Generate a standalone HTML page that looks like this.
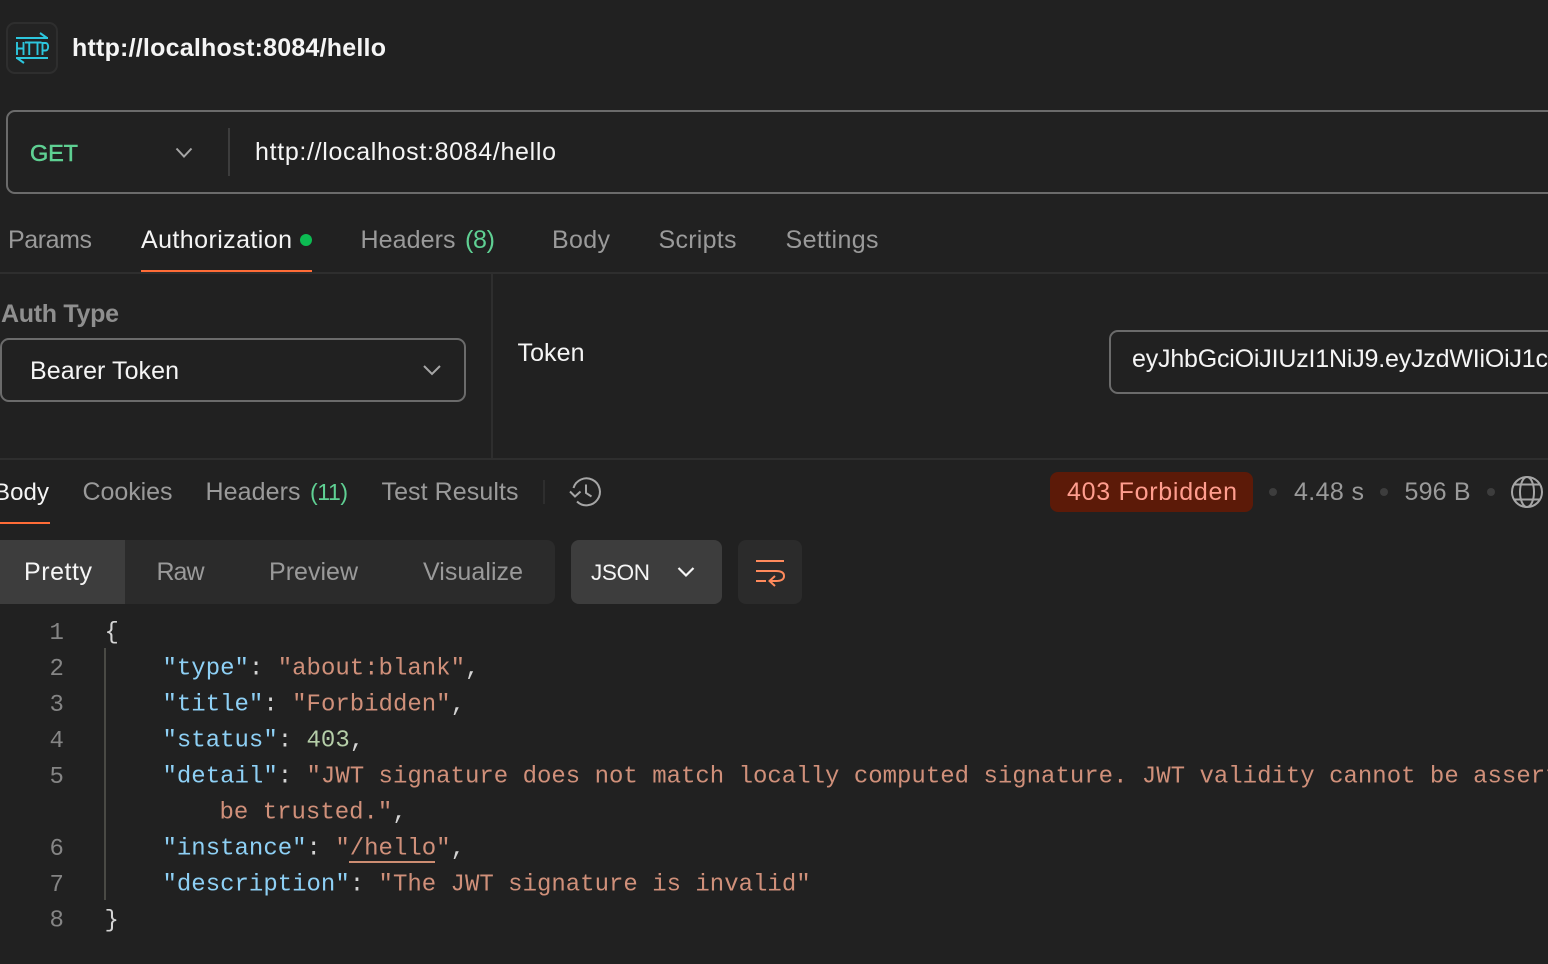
<!DOCTYPE html>
<html><head><meta charset="utf-8">
<style>
html,body{margin:0;padding:0;background:#212121;width:1548px;height:964px;overflow:hidden}
svg{display:block}
text{font-family:"Liberation Sans",sans-serif;font-size:25px;white-space:pre}
text.m{font-family:"Liberation Mono",monospace;font-size:24px}
.g{fill:#9a9a9a}.w{fill:#f5f5f5}
.k{fill:#8ed0f5}.s{fill:#d0907a}.n{fill:#b5cea8}.p{fill:#d4d4d4}.l{fill:#858585}
</style></head><body>
<svg width="1548" height="964" viewBox="0 0 1548 964" xmlns="http://www.w3.org/2000/svg" fill="none">
<rect width="1548" height="964" fill="#212121"/>

<!-- header -->
<rect x="7" y="23" width="50" height="50" rx="8" fill="#232323" stroke="#2e2e2e" stroke-width="2"/>
<g stroke="#2dc6dd" stroke-width="2">
<path d="M16 38H48M40 33l7 5"/>
<path d="M16 58H48M24 63l-7-5"/>
<path d="M17 55V42M23.500 55V42M17 48.500H23.500M25 42.500H33.500M29.250 42.500V55M33.500 42.500H41.500M37.500 42.500V55M42.500 55V43H45.500C49 43 49 50.500 45.500 50.500H42.500" stroke-width="1.900"/>
</g>
<text x="72" y="56" textLength="314" font-weight="700" class="w">http://localhost:8084/hello</text>

<!-- URL bar -->
<rect x="7" y="111" width="1600" height="82" rx="8" stroke="#6b6b6b" stroke-width="2"/>
<text x="30" y="161" textLength="48" style="font-size:23.500px;fill:#5fd093;stroke:#5fd093;stroke-width:.5px">GET</text>
<path d="M176.500 148.500l7.500 8 7.500-8" stroke="#a6a6a6" stroke-width="2"/>
<rect x="228" y="128" width="2" height="48" fill="#3d3d3d"/>
<text x="255" y="160" textLength="301" class="w">http://localhost:8084/hello</text>

<!-- request tabs -->
<text x="8" y="248" textLength="84" class="g">Params</text>
<text x="141" y="248" textLength="151" class="w">Authorization</text>
<circle cx="306" cy="240" r="6" fill="#0cbb52"/>
<text x="360.500" y="248" textLength="95" class="g">Headers</text>
<text x="465" y="248" textLength="30" style="fill:#5fd093">(8)</text>
<text x="552" y="248" textLength="58" class="g">Body</text>
<text x="658.500" y="248" textLength="78" class="g">Scripts</text>
<text x="785.500" y="248" textLength="93" class="g">Settings</text>
<rect y="272" width="1548" height="2" fill="#2e2e2e"/>
<rect x="141" y="270" width="171" height="2" fill="#ff6c37"/>

<!-- auth -->
<text x="1" y="322" textLength="118" font-weight="700" style="fill:#8f8f8f">Auth Type</text>
<rect x="1" y="339" width="464" height="62" rx="8" stroke="#6b6b6b" stroke-width="2"/>
<text x="30" y="379" textLength="149" class="w">Bearer Token</text>
<path d="M424 366l8 8 8-8" stroke="#a6a6a6" stroke-width="2"/>
<rect x="491" y="274" width="2" height="184" fill="#2e2e2e"/>
<text x="517.500" y="361" textLength="67" class="w">Token</text>
<rect x="1110" y="331" width="500" height="62" rx="8" stroke="#6b6b6b" stroke-width="2"/>
<text x="1132" y="367" textLength="416" class="w">eyJhbGciOiJIUzI1NiJ9.eyJzdWIiOiJ1c</text>
<rect y="458" width="1548" height="2" fill="#2e2e2e"/>

<!-- response tabs -->
<text x="-6" y="500" textLength="55" class="w" style="font-size:24px">Body</text>
<rect x="0" y="522" width="50" height="2" fill="#ff6c37"/>
<text x="82.500" y="500" textLength="90" class="g">Cookies</text>
<text x="205.500" y="500" textLength="95" class="g">Headers</text>
<text x="310" y="500" textLength="38" style="fill:#5fd093;font-size:23px">(11)</text>
<text x="381.500" y="500" textLength="137" class="g">Test Results</text>
<rect x="543" y="480" width="2" height="24" fill="#2e2e2e"/>
<g stroke="#a6a6a6" stroke-width="2">
<path d="M573.500 488A13.500 13.500 0 1 1 577 501.500"/>
<path d="M570 491.500l5 5 5.500-5"/>
<path d="M586 484.500v8.500l5.500 3.500"/>
</g>

<!-- status -->
<rect x="1050" y="472" width="203" height="40" rx="8" fill="#5c1a08"/>
<text x="1067" y="500" textLength="170" style="fill:#ff9d8e">403 Forbidden</text>
<circle cx="1273" cy="492" r="4" fill="#3d3d3d"/>
<text x="1294" y="500" textLength="70" class="g">4.48 s</text>
<circle cx="1384" cy="492" r="4" fill="#3d3d3d"/>
<text x="1404.500" y="500" textLength="66" class="g">596 B</text>
<circle cx="1491" cy="492" r="4" fill="#3d3d3d"/>
<g stroke="#a6a6a6" stroke-width="2">
<circle cx="1527" cy="492" r="15"/>
<ellipse cx="1527" cy="492" rx="7" ry="15"/>
<path d="M1514 484.500H1540M1514 499.500H1540"/>
</g>

<!-- view bar -->
<rect x="-10" y="540" width="565" height="64" rx="8" fill="#2b2b2b"/>
<path d="M0 540H125V604H0Z" fill="#3d3d3d"/>
<text x="24" y="580" textLength="68" class="w">Pretty</text>
<text x="156.500" y="580" textLength="48" class="g">Raw</text>
<text x="269" y="580" textLength="89" class="g">Preview</text>
<text x="423" y="580" textLength="100" class="g">Visualize</text>
<rect x="571" y="540" width="151" height="64" rx="8" fill="#3d3d3d"/>
<text x="591" y="580" textLength="59" class="w" style="font-size:22.500px">JSON</text>
<path d="M678.500 568l7.500 7.500 7.500-7.500" stroke="#f5f5f5" stroke-width="2.200"/>
<rect x="738" y="540" width="64" height="64" rx="8" fill="#2b2b2b"/>
<g stroke="#ff8a5c" stroke-width="2">
<path d="M756 561H784M756 571H776Q784 571 784 576T776 581H771"/>
<path d="M756 581H766M775 576l-5.500 5 5.500 5"/>
</g>

<!-- code -->
<rect x="104" y="648" width="2" height="252" fill="#4a4a45"/>
<text class="m l" x="49.500" y="639">1</text>
<text class="m l" x="49.500" y="675">2</text>
<text class="m l" x="49.500" y="711">3</text>
<text class="m l" x="49.500" y="747">4</text>
<text class="m l" x="49.500" y="783">5</text>
<text class="m l" x="49.500" y="855">6</text>
<text class="m l" x="49.500" y="891">7</text>
<text class="m l" x="49.500" y="926.500">8</text>
<text class="m p" x="104.500" y="638.500">{</text>
<text class="m" x="162.500" y="674.500"><tspan class="k">"type"</tspan><tspan class="p">: </tspan><tspan class="s">"about:blank"</tspan><tspan class="p">,</tspan></text>
<text class="m" x="162.500" y="710.500"><tspan class="k">"title"</tspan><tspan class="p">: </tspan><tspan class="s">"Forbidden"</tspan><tspan class="p">,</tspan></text>
<text class="m" x="162.500" y="746.500"><tspan class="k">"status"</tspan><tspan class="p">: </tspan><tspan class="n">403</tspan><tspan class="p">,</tspan></text>
<text class="m" x="162.500" y="782.500"><tspan class="k">"detail"</tspan><tspan class="p">: </tspan><tspan class="s">"JWT signature does not match locally computed signature. JWT validity cannot be asserted and should not</tspan></text>
<text class="m" x="219.500" y="818.500"><tspan class="s">be trusted."</tspan><tspan class="p">,</tspan></text>
<text class="m" x="162.500" y="854.500"><tspan class="k">"instance"</tspan><tspan class="p">: </tspan><tspan class="s">"/hello"</tspan><tspan class="p">,</tspan></text>
<text class="m" x="162.500" y="890.500"><tspan class="k">"description"</tspan><tspan class="p">: </tspan><tspan class="s">"The JWT signature is invalid"</tspan></text>
<text class="m p" x="104.500" y="926.500">}</text>
<rect x="349" y="861" width="86" height="2" fill="#cd8d72"/>
</svg>
</body></html>
